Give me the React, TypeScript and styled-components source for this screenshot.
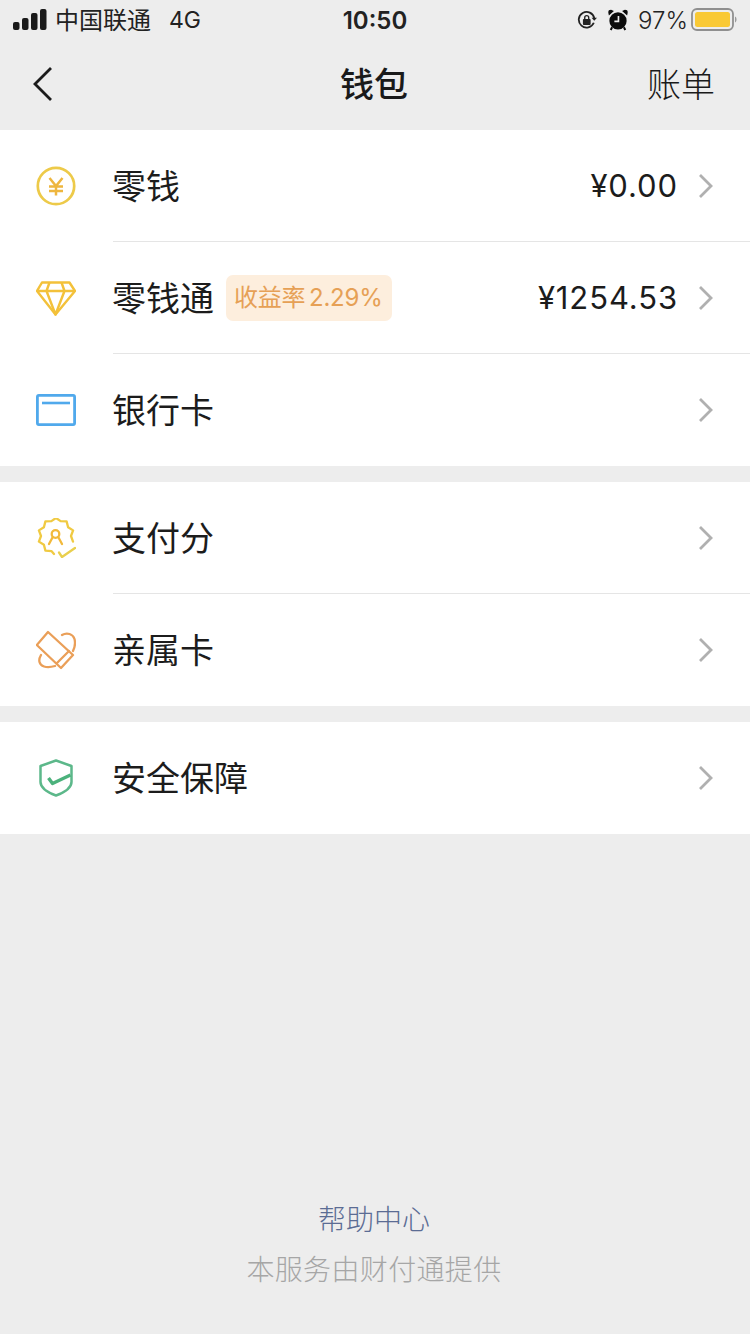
import React from 'react';
import styled, { createGlobalStyle } from 'styled-components';

const GlobalStyle = createGlobalStyle`
  html, body {
    margin: 0;
    padding: 0;
    background: #ededed;
  }
  body {
    font-family: "Noto Sans CJK SC", "Liberation Sans", sans-serif;
    color: #1a1a1a;
  }
`;

const Page = styled.div`
  display: flex;
  flex-direction: column;
  width: 750px;
  height: 1334px;
  overflow: hidden;
  background: #ededed;
`;

const StatusBar = styled.div`
  display: grid;
  grid-template-columns: 1fr auto 1fr;
  align-items: center;
  height: 40px;
  padding: 0 13px;
  font-size: 24px;
  color: #222;
`;

const StatusLeft = styled.div`
  display: flex;
  align-items: center;
`;

const Carrier = styled.span`
  margin-left: 8px;
  padding-bottom: 2px;
  line-height: 38px;
  font-weight: 400;
`;

const Network = styled.span`
  margin-left: 18px;
  font-family: Inter, "Liberation Sans", sans-serif;
  font-size: 23px;
`;

const Clock = styled.span`
  font-family: Inter, "Liberation Sans", sans-serif;
  font-size: 24px;
  font-weight: 600;
`;

const StatusRight = styled.div`
  display: flex;
  align-items: center;
  justify-content: flex-end;
`;

const AlarmGlyph = styled.svg`
  margin-left: 11px;
`;

const Percent = styled.span`
  margin: 0 3px 0 10px;
  font-family: Inter, "Liberation Sans", sans-serif;
  font-size: 24px;
  font-weight: 300;
`;

const NavBar = styled.div`
  display: grid;
  grid-template-columns: 1fr auto 1fr;
  align-items: center;
  height: 90px;
  padding: 0 35px 0 33px;
`;

const NavTitle = styled.div`
  padding-bottom: 4px;
  font-size: 34px;
  font-weight: 500;
  line-height: 84px;
`;

const NavAction = styled.div`
  justify-self: end;
  padding-bottom: 4px;
  font-size: 34px;
  font-weight: 300;
  line-height: 84px;
`;

const BackButton = styled.div`
  display: flex;
  align-items: center;
  margin-left: -1px;
  padding-bottom: 2px;
`;

const Group = styled.div`
  background: #fff;
  & + & {
    margin-top: 16px;
  }
`;

const Row = styled.div`
  display: flex;
  align-items: center;
  height: 112px;
  padding-left: 36px;
`;

const IconSlot = styled.div`
  display: flex;
  align-items: center;
  justify-content: center;
  flex: none;
  width: 40px;
  height: 40px;
  margin-right: 37px;
`;

const RowBody = styled.div<{ $divided?: boolean }>`
  display: flex;
  flex: 1;
  align-items: center;
  height: 100%;
  padding-right: 36px;
  box-sizing: border-box;
  border-bottom: ${(p) => (p.$divided ? '1px solid #e5e5e5' : 'none')};
`;

const Label = styled.span`
  margin-left: -1px;
  padding-bottom: 2px;
  font-size: 34px;
  font-weight: 400;
  line-height: 1;
  color: #1c1c1c;
`;

const RateTag = styled.span`
  margin-left: 12px;
  padding: 0 9px 0 8px;
  height: 46px;
  line-height: 46px;
  border-radius: 7px;
  background: #fdeedd;
  color: #e6a055;
  font-family: Inter, "Noto Sans CJK SC", sans-serif;
  font-size: 24px;
  font-weight: 400;
  letter-spacing: -0.2px;
  word-spacing: -3px;
`;

const Amount = styled.span`
  margin-left: auto;
  font-family: Inter, "Liberation Sans", sans-serif;
  font-size: 31px;
  letter-spacing: 0.9px;
  color: #1c1c1c;
`;

const Chevron = styled.svg<{ $pushed?: boolean }>`
  flex: none;
  margin-left: ${(p) => (p.$pushed ? 'auto' : '20px')};
  width: 16px;
  height: 26px;
`;

const Footer = styled.div`
  display: flex;
  flex-direction: column;
  align-items: center;
  margin-top: auto;
  padding: 0 2px 41px 0;
  font-size: 28px;
  font-weight: 300;
`;

const HelpLink = styled.span`
  line-height: 50px;
  color: #5b6c94;
`;

const Provider = styled.span`
  line-height: 50px;
  letter-spacing: 0.35px;
  color: #a6a6a6;
`;

const SignalBars = () => (
  <svg width="34" height="22" viewBox="0 0 34 22">
    <rect x="0" y="13" width="6.500" height="8" rx="2" fill="#1a1a1a" />
    <rect x="9" y="9" width="6.500" height="12" rx="2" fill="#1a1a1a" />
    <rect x="18" y="4" width="6.500" height="17" rx="2" fill="#1a1a1a" />
    <rect x="27" y="0" width="6.500" height="21" rx="2" fill="#1a1a1a" />
  </svg>
);

const RotationLock = () => (
  <svg width="20" height="20" viewBox="0 0 22 22" fill="none">
    <path d="M18.500 14A8.600 8.600 0 1 1 19 9" stroke="#222" strokeWidth="2" />
    <path d="M16 8.400h6l-3 3.400z" fill="#222" />
    <rect x="6.500" y="10" width="8.500" height="6.500" rx="1" fill="#222" />
    <path d="M8.500 10V8.400a2.200 2.200 0 0 1 4.400 0V10" stroke="#222" strokeWidth="1.500" />
  </svg>
);

const Alarm = () => (
  <AlarmGlyph width="20" height="22" viewBox="0 0 22 24">
    <circle cx="11" cy="13" r="9.500" fill="#0c0c0c" />
    <path d="M1 7 6.500 2 3.400.8A3 3 0 0 0 .4 4.200zM21 7 15.500 2l3.100-1.200a3 3 0 0 1 3 3.400z" fill="#0c0c0c" />
    <path d="M4.500 20 3 23M17.500 20l1.500 3" stroke="#0c0c0c" strokeWidth="2.200" />
    <path d="M11.500 7.500v6H7" stroke="#eee" strokeWidth="1.800" fill="none" />
  </AlarmGlyph>
);

const Battery = () => (
  <svg width="46" height="24" viewBox="0 0 46 24">
    <rect x="1" y="1" width="41" height="21" rx="5" fill="none" stroke="#8f8f8f" strokeWidth="1.800" />
    <rect x="4" y="4" width="35" height="15" rx="2.500" fill="#f9c935" />
    <path d="M44 8.500c1 .4 1.500 1.600 1.500 3s-.5 2.600-1.500 3z" fill="#9a9a9a" />
  </svg>
);

const BackArrow = () => (
  <svg width="22" height="36" viewBox="0 0 22 36" fill="none">
    <path d="M19 2 3 18l16 16" stroke="#1c1c1c" strokeWidth="2.800" />
  </svg>
);

const CoinIcon = () => (
  <svg width="40" height="40" viewBox="0 0 40 40" fill="none" stroke="#edca49" strokeWidth="2.700">
    <circle cx="20" cy="20" r="18.200" />
    <path d="M13.500 12l6.500 8 6.500-8M13 20.500h14M13 25h14M20 20v9.500" stroke="#eeb63e" strokeWidth="2.500" />
  </svg>
);

const DiamondIcon = () => (
  <svg width="40" height="36" viewBox="0 -1 40 36" fill="none" stroke="#f3c13a" strokeWidth="2.400" strokeLinejoin="round">
    <path d="M6 1.500h27.500l5.500 8.500-19.500 23.500L1 10z" />
    <path d="M1 10h38M13.500 1.500 10.500 10l9 23.500 9-23.500-3-8.500" />
  </svg>
);

const CardIcon = () => (
  <svg width="40" height="32" viewBox="0 0 40 32" fill="none" stroke="#50a9ec">
    <rect x="1.400" y="1.400" width="37.200" height="29.200" rx="1.500" strokeWidth="2.800" />
    <path d="M6 9h28" strokeWidth="2.600" />
  </svg>
);

const ScoreIcon = () => (
  <svg width="40" height="40" viewBox="0 0 40 40" fill="none" stroke="#f0ca42" strokeWidth="2.300" strokeLinejoin="round" strokeLinecap="round">
    <path d="M37 23.600 35 18l2.100-5.600-5-3.200-1.500-5.800-6-.3L20 0l-4.600 3.100-6 .3-1.500 5.800-5 3.200L5 18l-2.100 5.600 5 3.200 1.500 5.800 6 .5L18 36" />
    <path d="M23 34.500l3 4.500 13-9" stroke="#e9cf4d" />
    <circle cx="19.500" cy="16" r="3.800" stroke="#f2b93b" />
    <path d="M16.500 19.500 13 26M22.500 19.500 26 26" stroke="#f2b93b" />
  </svg>
);

const KinshipCardIcon = () => (
  <svg width="40" height="40" viewBox="0 0 40 40" fill="none" stroke="#ea9f58" strokeWidth="2.300" strokeLinejoin="round" strokeLinecap="round">
    <path d="M12 2 37 25 25 38 0.800 15z" />
    <path d="M21 33 33 21" />
    <path d="M26 5C31 2 37 4 38.500 9c1 4 .5 8-1.500 12M5 25C2 30 3 35 8 36.500c3.500 1 7.500.5 11-.5" />
  </svg>
);

const ShieldIcon = () => (
  <svg width="34" height="38" viewBox="0 0 34 38" fill="none" stroke="#5cb88a" strokeWidth="2.500" strokeLinejoin="round">
    <path d="M17 1.500 32.500 7v16c0 6-6 10-15.500 13.500C7.500 33 1.500 29 1.500 23V7z" />
    <path d="M9.500 19l4 5.500 18-8.500" stroke="#4cb27c" strokeWidth="3.400" />
  </svg>
);

const Arrow = ({ pushed }: { pushed?: boolean }) => (
  <Chevron $pushed={pushed} viewBox="0 0 16 26">
    <path d="M2 2l11 11L2 24" fill="none" stroke="#b0b0b0" strokeWidth="2.800" />
  </Chevron>
);

const App = () => (
  <Page>
    <GlobalStyle />
    <StatusBar>
      <StatusLeft>
        <SignalBars />
        <Carrier>中国联通</Carrier>
        <Network>4G</Network>
      </StatusLeft>
      <Clock>10:50</Clock>
      <StatusRight>
        <RotationLock />
        <Alarm />
        <Percent>97%</Percent>
        <Battery />
      </StatusRight>
    </StatusBar>

    <NavBar>
      <BackButton><BackArrow /></BackButton>
      <NavTitle>钱包</NavTitle>
      <NavAction>账单</NavAction>
    </NavBar>

    <Group>
      <Row>
        <IconSlot><CoinIcon /></IconSlot>
        <RowBody $divided>
          <Label>零钱</Label>
          <Amount>¥0.00</Amount>
          <Arrow />
        </RowBody>
      </Row>
      <Row>
        <IconSlot><DiamondIcon /></IconSlot>
        <RowBody $divided>
          <Label>零钱通</Label>
          <RateTag>收益率 2.29%</RateTag>
          <Amount>¥1254.53</Amount>
          <Arrow />
        </RowBody>
      </Row>
      <Row>
        <IconSlot><CardIcon /></IconSlot>
        <RowBody>
          <Label>银行卡</Label>
          <Arrow pushed />
        </RowBody>
      </Row>
    </Group>

    <Group>
      <Row>
        <IconSlot><ScoreIcon /></IconSlot>
        <RowBody $divided>
          <Label>支付分</Label>
          <Arrow pushed />
        </RowBody>
      </Row>
      <Row>
        <IconSlot><KinshipCardIcon /></IconSlot>
        <RowBody>
          <Label>亲属卡</Label>
          <Arrow pushed />
        </RowBody>
      </Row>
    </Group>

    <Group>
      <Row>
        <IconSlot><ShieldIcon /></IconSlot>
        <RowBody>
          <Label>安全保障</Label>
          <Arrow pushed />
        </RowBody>
      </Row>
    </Group>

    <Footer>
      <HelpLink>帮助中心</HelpLink>
      <Provider>本服务由财付通提供</Provider>
    </Footer>
  </Page>
);

export default App;
